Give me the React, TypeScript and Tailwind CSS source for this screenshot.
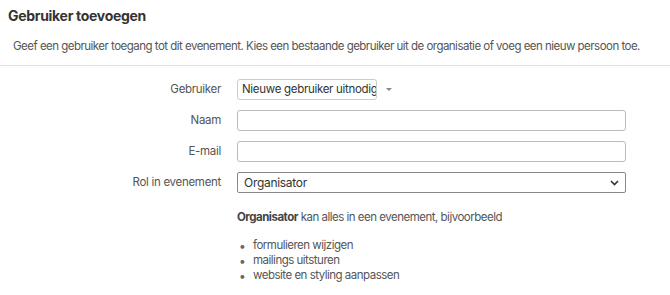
const ROLE_EXAMPLES = ['formulieren wijzigen', 'mailings uitsturen', 'website en styling aanpassen'];

function Label({ children }: { children: React.ReactNode }) {
  return <div className="w-[237px] shrink-0 pr-[16px] text-right text-[11.5px] text-[#555]">{children}</div>;
}

export default function App() {
  return (
    <div
      className="w-[670px] h-[295px] bg-white text-[#444] overflow-hidden"
      style={{ fontFamily: 'Inter, "Liberation Sans", sans-serif' }}
    >
      {/* Header */}
      <div className="border-b border-[#e2e2e2] pb-[10px]">
        <h2 className="pl-[8px] pt-[5px] text-[14px] font-bold tracking-[-0.3px] text-[#333]">Gebruiker toevoegen</h2>
        <p className="pl-[13px] mt-[12px] text-[11.5px] tracking-[-0.52px] text-[#555]">
          Geef een gebruiker toegang tot dit evenement. Kies een bestaande gebruiker uit de organisatie of voeg een nieuw persoon toe.
        </p>
      </div>

      {/* Form */}
      <div className="pt-[13px] flex flex-col gap-[10px] tracking-[-0.3px]">
        <div className="flex items-center h-[21px]">
          <Label>Gebruiker</Label>
          <div className="flex items-center gap-[8px]">
            <div className="w-[140px] h-[21px] border border-[#ccc] rounded-[3px] pl-[4px] text-[11.5px] text-[#333] leading-[19px] whitespace-nowrap overflow-hidden">
              Nieuwe gebruiker uitnodigen
            </div>
            <svg width="8" height="5" viewBox="0 0 8 5">
              <path d="M1 1h6L4 4z" fill="#888" />
            </svg>
          </div>
        </div>

        <div className="flex items-center h-[21px]">
          <Label>Naam</Label>
          <div className="w-[389px] h-[21px] border border-[#bbb] rounded-[3px]" />
        </div>

        <div className="flex items-center h-[21px]">
          <Label>E-mail</Label>
          <div className="w-[389px] h-[21px] border border-[#bbb] rounded-[3px]" />
        </div>

        <div className="flex items-center h-[21px]">
          <Label>Rol in evenement</Label>
          <div className="w-[389px] h-[21px] border border-[#888] rounded-[2px] pl-[6px] pr-[6px] flex items-center justify-between text-[12px] text-[#333]">
            <span>Organisator</span>
            <svg width="9" height="6" viewBox="0 0 9 6">
              <path d="M1 1l3.5 3.5L8 1" fill="none" stroke="#333" strokeWidth="1.6" />
            </svg>
          </div>
        </div>

        {/* Role description */}
        <div className="pl-[237px] pt-[6px] text-[11.5px] tracking-[-0.5px] text-[#555]">
          <p>
            <span className="font-bold text-[#444]">Organisator</span> kan alles in een evenement, bijvoorbeeld
          </p>
          <ul className="mt-[12px]">
            {ROLE_EXAMPLES.map(item => (
              <li key={item} className="flex items-center h-[15px]">
                <span className="w-[16px] pl-[2px] text-[12px] text-[#666]">•</span>
                <span>{item}</span>
              </li>
            ))}
          </ul>
        </div>
      </div>
    </div>
  );
}
